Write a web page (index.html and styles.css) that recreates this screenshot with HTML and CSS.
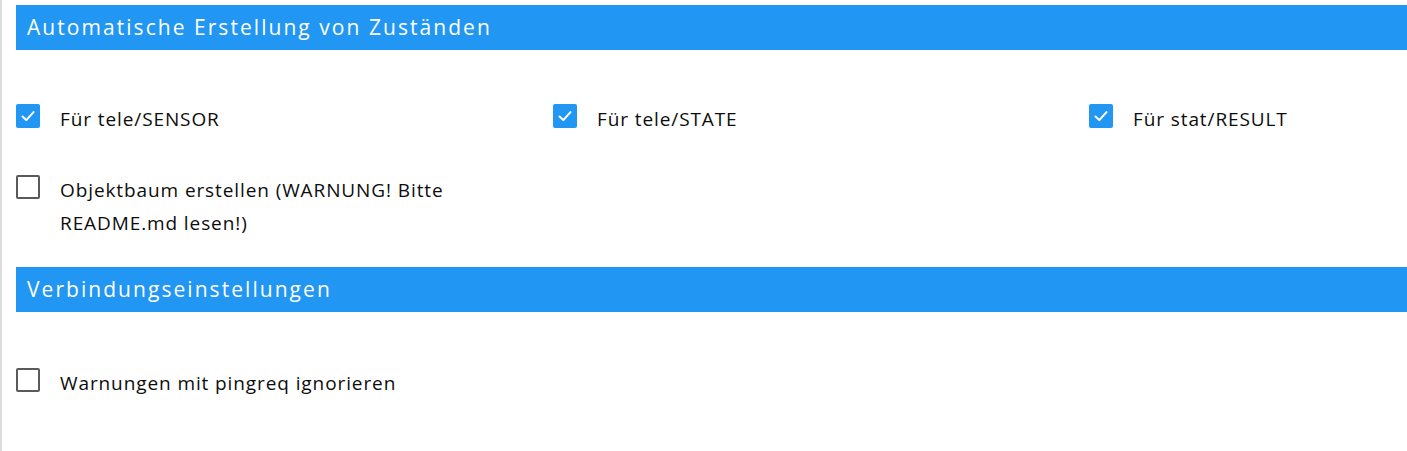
FILE: index.html
```html
<!DOCTYPE html>
<html lang="de">
<head>
<meta charset="utf-8">
<link rel="stylesheet" href="styles.css">
</head>
<body>
<div class="page">
  <div class="section-title">Automatische Erstellung von Zuständen</div>
  <div class="grid first">
    <div class="check"><span class="box checked"><svg viewBox="0 0 24 24" width="24" height="24"><path d="M6.5 12.5l3.8 3.6 7.2-8" fill="none" stroke="#fff" stroke-width="2" stroke-linecap="round" stroke-linejoin="round"/></svg></span><span class="label">Für tele/SENSOR</span></div>
    <div class="check"><span class="box checked"><svg viewBox="0 0 24 24" width="24" height="24"><path d="M6.5 12.5l3.8 3.6 7.2-8" fill="none" stroke="#fff" stroke-width="2" stroke-linecap="round" stroke-linejoin="round"/></svg></span><span class="label">Für tele/STATE</span></div>
    <div class="check"><span class="box checked"><svg viewBox="0 0 24 24" width="24" height="24"><path d="M6.5 12.5l3.8 3.6 7.2-8" fill="none" stroke="#fff" stroke-width="2" stroke-linecap="round" stroke-linejoin="round"/></svg></span><span class="label">Für stat/RESULT</span></div>
    <div class="check wide"><span class="box"></span><span class="label">Objektbaum erstellen (WARNUNG! Bitte README.md lesen!)</span></div>
  </div>
  <div class="section-title">Verbindungseinstellungen</div>
  <div class="grid last">
    <div class="check"><span class="box"></span><span class="label">Warnungen mit pingreq ignorieren</span></div>
  </div>
</div>
</body>
</html>
```
FILE: styles.css
```css
html, body {
  margin: 0;
  padding: 0;
  background: #fff;
  overflow: hidden;
}
.page {
  width: 1391px;
  height: 451px;
  border-left: 2px solid #dcdcdc;
  padding: 5px 0 0 14px;
  box-sizing: content-box;
  font-family: "Open Sans", "Noto Sans", sans-serif;
  color: #0d0d0d;
}
.section-title {
  height: 45px;
  background: #2196f3;
  color: #fff;
  font-size: 21px;
  font-weight: 500;
  letter-spacing: 2.05px;
  padding-left: 11px;
  padding-bottom: 1px;
  box-sizing: border-box;
  display: flex;
  align-items: center;
}
.grid {
  display: grid;
  grid-template-columns: 537px 536px 1fr;
  row-gap: 38px;
}
.grid.first {
  margin-top: 53px;
  margin-bottom: 27px;
}
.grid.last {
  margin-top: 55px;
}
.check {
  display: flex;
  align-items: flex-start;
  gap: 20px;
  font-size: 19px;
  letter-spacing: 0.9px;
  line-height: 33px;
}
.check.wide .label {
  max-width: 430px;
}
.box {
  flex: none;
  width: 24px;
  height: 24px;
  margin-top: 1px;
  box-sizing: border-box;
  border: 2.5px solid #5a5a5a;
  border-radius: 2px;
}
.box.checked {
  background: #2196f3;
  border: none;
}
.box svg {
  display: block;
}
```
